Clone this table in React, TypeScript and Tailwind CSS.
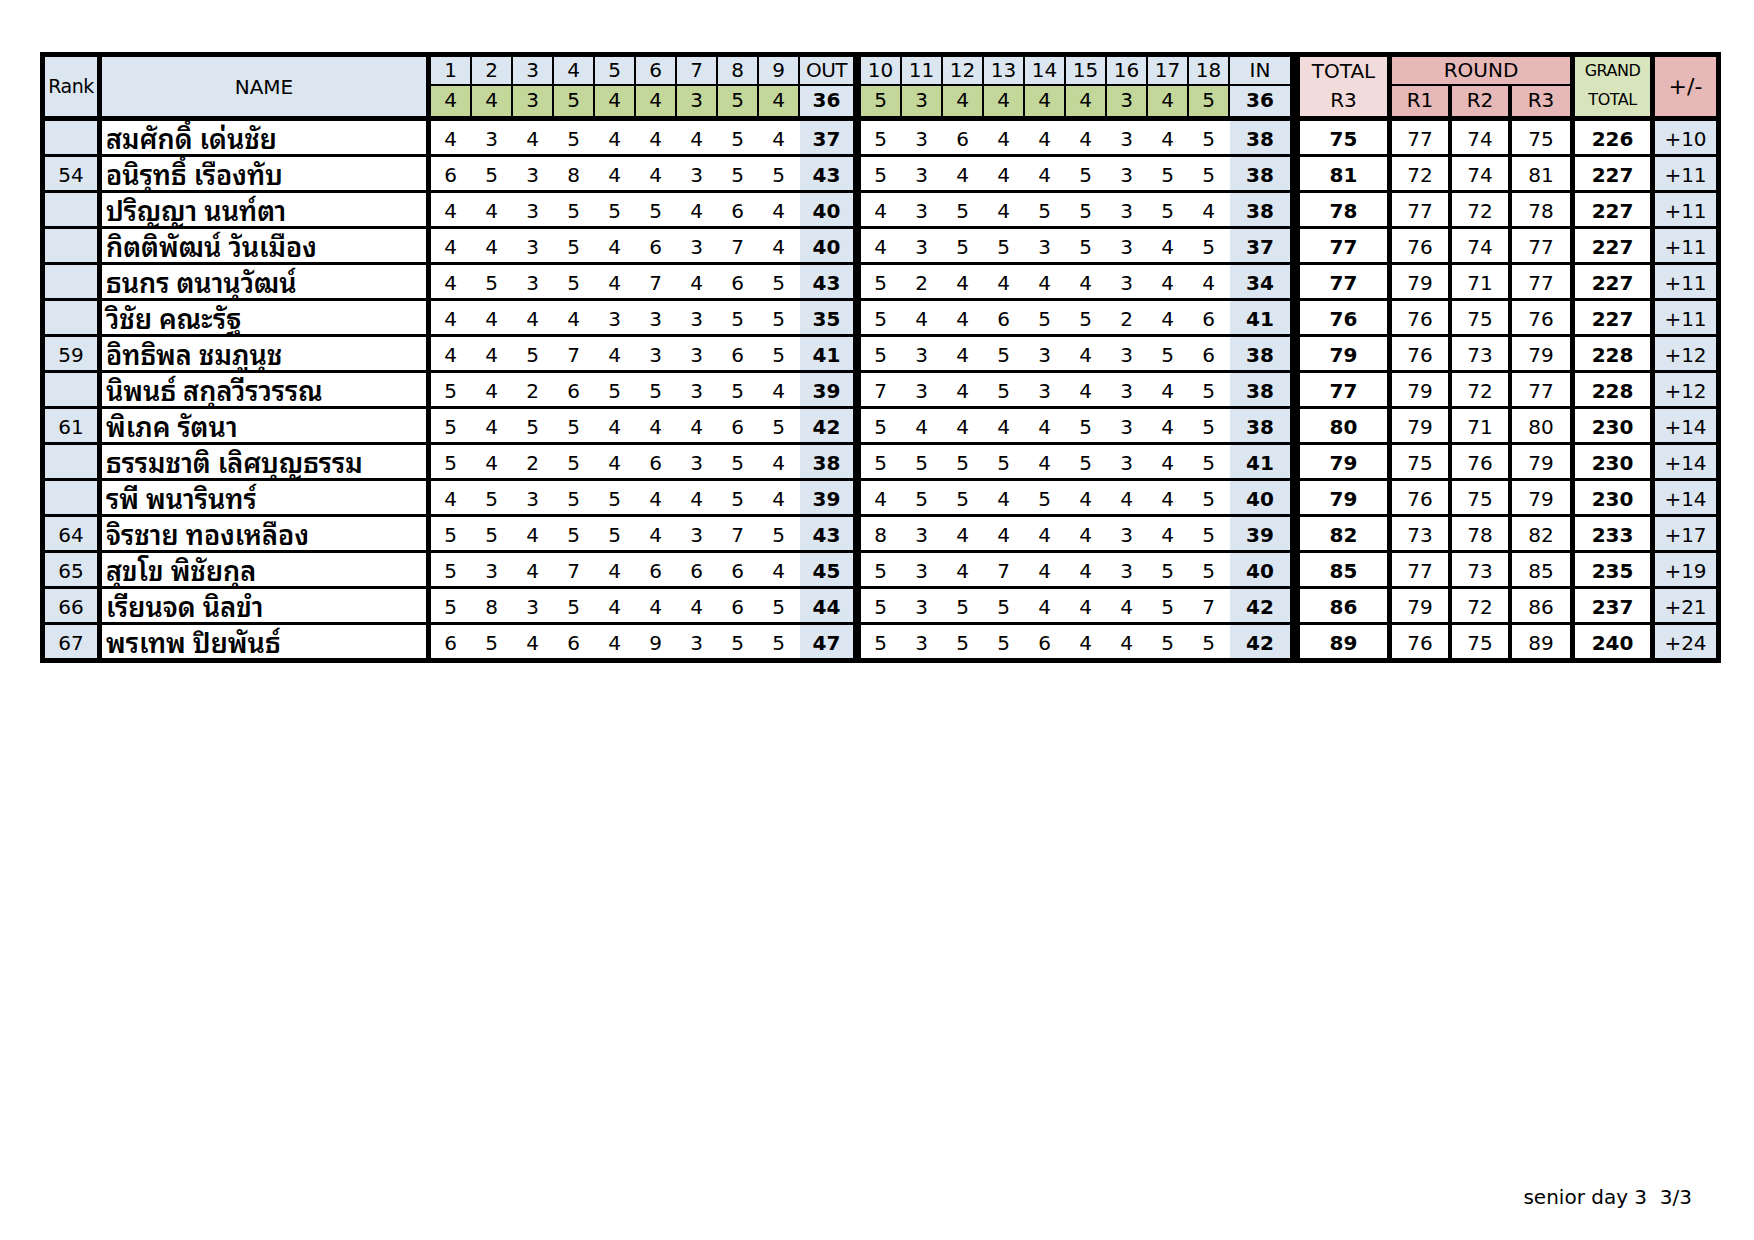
import React from "react";

type Row = {
  rank: string;
  name: string;
  front: number[];
  out: number;
  back: number[];
  inn: number;
  total: number;
  r1: number;
  r2: number;
  r3: number;
  grand: number;
  pm: string;
};

const front = [4, 4, 3, 5, 4, 4, 3, 5, 4];
const back = [5, 3, 4, 4, 4, 4, 3, 4, 5];

const rows: Row[] = [
  { rank: "", name: "สมศักดิ์ เด่นชัย", front: [4, 3, 4, 5, 4, 4, 4, 5, 4], out: 37, back: [5, 3, 6, 4, 4, 4, 3, 4, 5], inn: 38, total: 75, r1: 77, r2: 74, r3: 75, grand: 226, pm: "+10" },
  { rank: "54", name: "อนิรุทธิ์ เรืองทับ", front: [6, 5, 3, 8, 4, 4, 3, 5, 5], out: 43, back: [5, 3, 4, 4, 4, 5, 3, 5, 5], inn: 38, total: 81, r1: 72, r2: 74, r3: 81, grand: 227, pm: "+11" },
  { rank: "", name: "ปริญญา นนท์ตา", front: [4, 4, 3, 5, 5, 5, 4, 6, 4], out: 40, back: [4, 3, 5, 4, 5, 5, 3, 5, 4], inn: 38, total: 78, r1: 77, r2: 72, r3: 78, grand: 227, pm: "+11" },
  { rank: "", name: "กิตติพัฒน์ วันเมือง", front: [4, 4, 3, 5, 4, 6, 3, 7, 4], out: 40, back: [4, 3, 5, 5, 3, 5, 3, 4, 5], inn: 37, total: 77, r1: 76, r2: 74, r3: 77, grand: 227, pm: "+11" },
  { rank: "", name: "ธนกร ตนานุวัฒน์", front: [4, 5, 3, 5, 4, 7, 4, 6, 5], out: 43, back: [5, 2, 4, 4, 4, 4, 3, 4, 4], inn: 34, total: 77, r1: 79, r2: 71, r3: 77, grand: 227, pm: "+11" },
  { rank: "", name: "วิชัย คณะรัฐ", front: [4, 4, 4, 4, 3, 3, 3, 5, 5], out: 35, back: [5, 4, 4, 6, 5, 5, 2, 4, 6], inn: 41, total: 76, r1: 76, r2: 75, r3: 76, grand: 227, pm: "+11" },
  { rank: "59", name: "อิทธิพล ชมภูนุช", front: [4, 4, 5, 7, 4, 3, 3, 6, 5], out: 41, back: [5, 3, 4, 5, 3, 4, 3, 5, 6], inn: 38, total: 79, r1: 76, r2: 73, r3: 79, grand: 228, pm: "+12" },
  { rank: "", name: "นิพนธ์ สกุลวีรวรรณ", front: [5, 4, 2, 6, 5, 5, 3, 5, 4], out: 39, back: [7, 3, 4, 5, 3, 4, 3, 4, 5], inn: 38, total: 77, r1: 79, r2: 72, r3: 77, grand: 228, pm: "+12" },
  { rank: "61", name: "พิเภค รัตนา", front: [5, 4, 5, 5, 4, 4, 4, 6, 5], out: 42, back: [5, 4, 4, 4, 4, 5, 3, 4, 5], inn: 38, total: 80, r1: 79, r2: 71, r3: 80, grand: 230, pm: "+14" },
  { rank: "", name: "ธรรมชาติ เลิศบุญธรรม", front: [5, 4, 2, 5, 4, 6, 3, 5, 4], out: 38, back: [5, 5, 5, 5, 4, 5, 3, 4, 5], inn: 41, total: 79, r1: 75, r2: 76, r3: 79, grand: 230, pm: "+14" },
  { rank: "", name: "รพี พนารินทร์", front: [4, 5, 3, 5, 5, 4, 4, 5, 4], out: 39, back: [4, 5, 5, 4, 5, 4, 4, 4, 5], inn: 40, total: 79, r1: 76, r2: 75, r3: 79, grand: 230, pm: "+14" },
  { rank: "64", name: "จิรชาย ทองเหลือง", front: [5, 5, 4, 5, 5, 4, 3, 7, 5], out: 43, back: [8, 3, 4, 4, 4, 4, 3, 4, 5], inn: 39, total: 82, r1: 73, r2: 78, r3: 82, grand: 233, pm: "+17" },
  { rank: "65", name: "สุขโข พิชัยกุล", front: [5, 3, 4, 7, 4, 6, 6, 6, 4], out: 45, back: [5, 3, 4, 7, 4, 4, 3, 5, 5], inn: 40, total: 85, r1: 77, r2: 73, r3: 85, grand: 235, pm: "+19" },
  { rank: "66", name: "เรียนจด นิลขำ", front: [5, 8, 3, 5, 4, 4, 4, 6, 5], out: 44, back: [5, 3, 5, 5, 4, 4, 4, 5, 7], inn: 42, total: 86, r1: 79, r2: 72, r3: 86, grand: 237, pm: "+21" },
  { rank: "67", name: "พรเทพ ปิยพันธ์", front: [6, 5, 4, 6, 4, 9, 3, 5, 5], out: 47, back: [5, 3, 5, 5, 6, 4, 4, 5, 5], inn: 42, total: 89, r1: 76, r2: 75, r3: 89, grand: 240, pm: "+24" },
];

// header: hole number on top, par below
function HoleHead({ n, par }: { n: number; par: number }) {
  return (
    <div className="flex w-[39px] flex-col gap-[2px] mr-[2px]">
      <div className="flex h-[27px] items-start justify-center bg-[#dce6f1] leading-[26px]">{n}</div>
      <div className="flex h-[30px] items-start justify-center bg-[#c4d79b] leading-[28px]">{par}</div>
    </div>
  );
}

function Header() {
  return (
    <div className="flex h-[59px] text-[20px] text-black">
      <div className="mr-[5px] flex w-[52px] items-center justify-center bg-[#dce6f1] text-[19px] tracking-[-0.5px]">Rank</div>
      <div className="mr-[5px] flex w-[324px] items-center justify-center bg-[#dce6f1]">NAME</div>
      {front.map((p, i) => (
        <HoleHead key={i} n={i + 1} par={p} />
      ))}
      <div className="mr-[8px] flex w-[53px] flex-col gap-[2px]">
        <div className="flex h-[27px] items-start justify-center bg-[#dce6f1] leading-[26px] tracking-[-0.5px]">OUT</div>
        <div className="flex h-[30px] items-start justify-center bg-[#dce6f1] font-bold leading-[28px]">36</div>
      </div>
      {back.map((p, i) => (
        <HoleHead key={i} n={i + 10} par={p} />
      ))}
      <div className="mr-[10px] flex w-[60px] flex-col gap-[2px]">
        <div className="flex h-[27px] items-start justify-center bg-[#dce6f1] leading-[26px]">IN</div>
        <div className="flex h-[30px] items-start justify-center bg-[#dce6f1] font-bold leading-[28px]">36</div>
      </div>
      <div className="mr-[5px] flex w-[87px] flex-col items-center bg-[#f2dcdb] leading-[28px]">
        <span className="h-[29px]">TOTAL</span>
        <span>R3</span>
      </div>
      <div className="mr-[5px] flex w-[178px] flex-col gap-[2px]">
        <div className="flex h-[27px] items-start justify-center bg-[#e6b8b7] leading-[26px]">ROUND</div>
        <div className="flex h-[30px] gap-[4px]">
          <div className="flex w-[56px] items-start justify-center bg-[#e6b8b7] leading-[28px]">R1</div>
          <div className="flex w-[56px] items-start justify-center bg-[#e6b8b7] leading-[28px]">R2</div>
          <div className="flex w-[58px] items-start justify-center bg-[#e6b8b7] leading-[28px]">R3</div>
        </div>
      </div>
      <div className="mr-[5px] flex w-[75px] flex-col items-center bg-[#d8e4bc] text-[16px] leading-[28px] tracking-[-0.5px]">
        <span className="h-[29px]">GRAND</span>
        <span>TOTAL</span>
      </div>
      <div className="flex w-[61px] items-center justify-center bg-[#e6b8b7] text-[22px]">+/-</div>
    </div>
  );
}

function ScoreRow({ r }: { r: Row }) {
  return (
    <div className="flex h-[33px] items-stretch text-[20px] leading-[36px] text-black">
      <div className="mr-[5px] w-[52px] bg-[#dce6f1] text-center">{r.rank}</div>
      <div
        className="mr-[5px] flex w-[324px] items-end whitespace-nowrap bg-white pb-[3px] pl-[4px] text-[27px] font-semibold leading-[28px]"
        style={{ fontFamily: '"Noto Sans Thai Looped", "Loma", "Garuda", "Noto Serif Thai", "Norasi", "Noto Sans Thai", sans-serif' }}
      >
        {r.name}
      </div>
      {r.front.map((s, i) => (
        <div key={i} className="w-[41px] bg-white pr-[2px] text-center">{s}</div>
      ))}
      <div className="mr-[8px] w-[53px] bg-[#dce6f1] text-center font-bold">{r.out}</div>
      {r.back.map((s, i) => (
        <div key={i} className="w-[41px] bg-white pr-[2px] text-center">{s}</div>
      ))}
      <div className="mr-[10px] w-[60px] bg-[#dce6f1] text-center font-bold">{r.inn}</div>
      <div className="mr-[5px] w-[87px] bg-white text-center font-bold">{r.total}</div>
      <div className="mr-[4px] w-[56px] bg-white text-center">{r.r1}</div>
      <div className="mr-[4px] w-[56px] bg-white text-center">{r.r2}</div>
      <div className="mr-[5px] w-[58px] bg-white text-center">{r.r3}</div>
      <div className="mr-[5px] w-[75px] bg-white text-center font-bold">{r.grand}</div>
      <div className="w-[61px] bg-[#dce6f1] text-center">{r.pm}</div>
    </div>
  );
}

export default function App() {
  return (
    <div
      className="relative h-[1240px] w-[1754px] bg-white"
      style={{ fontFamily: '"DejaVu Sans", "Noto Sans Thai", sans-serif' }}
    >
      <div className="pl-[40px] pt-[52px]">
        <div className="flex w-[1681px] flex-col gap-[3px] bg-black p-[5px]">
          <div className="mb-[2px]">
            <Header />
          </div>
          {rows.map((r, i) => (
            <ScoreRow key={i} r={r} />
          ))}
        </div>
      </div>
      <div className="absolute bottom-[28px] right-[62px] text-[20px] text-black whitespace-pre">senior day 3  3/3</div>
    </div>
  );
}
